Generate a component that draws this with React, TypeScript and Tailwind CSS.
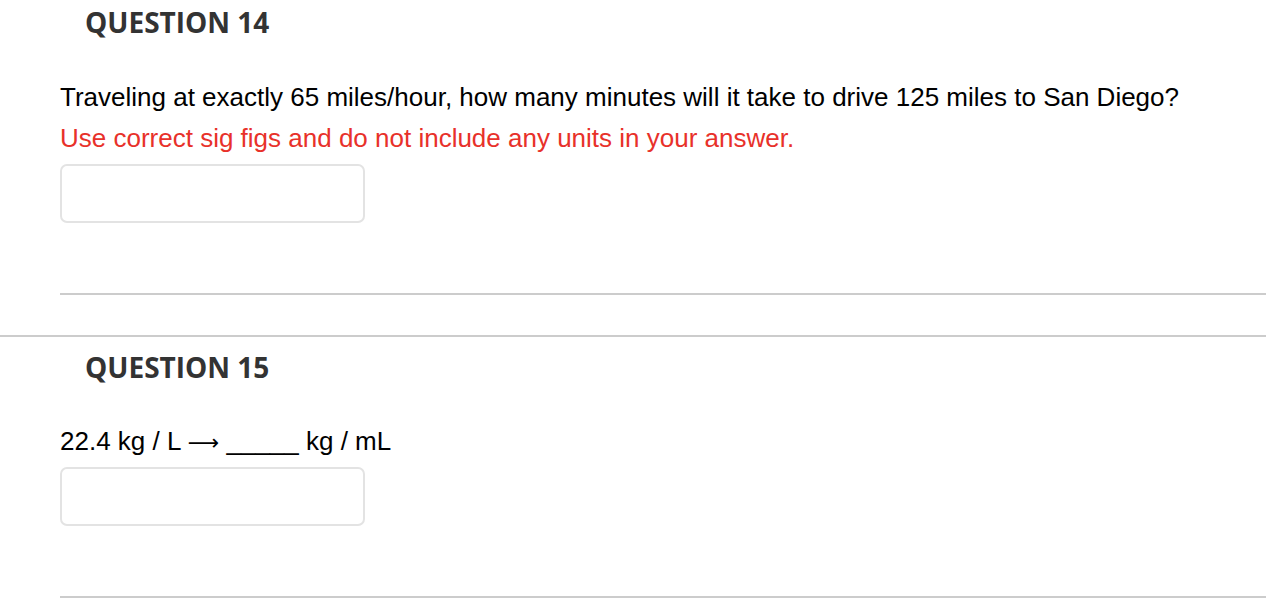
import React from 'react';

const AnswerBox = () => (
  <input
    type="text"
    className="block w-[305px] h-[59px] rounded-[7px] border-2 border-[#e3e3e3] bg-white outline-none"
  />
);

const QuestionHeading = ({ n }: { n: number }) => (
  <h2 className="pl-[25px] text-[28px] leading-[36px] font-bold text-[#333333] [font-family:'Open_Sans',sans-serif]">
    QUESTION {n}
  </h2>
);

export default function App() {
  return (
    <div className="bg-white w-[1266px] h-[598px] overflow-hidden [font-family:'Liberation_Sans',Arial,sans-serif]">
      <section className="pl-[60px] pt-[4px]">
        <QuestionHeading n={14} />
        <p className="mt-[42px] text-[26px] leading-[30px] text-black">
          Traveling at exactly 65 miles/hour, how many minutes will it take to drive 125 miles to San Diego?
        </p>
        <p className="mt-[11px] text-[26px] leading-[30px] text-[#e8312a]">
          Use correct sig figs and do not include any units in your answer.
        </p>
        <div className="mt-[11px]">
          <AnswerBox />
        </div>
        <hr className="mt-[70px] border-0 h-[2px] bg-[#cccccc]" />
      </section>

      <hr className="mt-[40px] border-0 h-[2px] bg-[#cccccc]" />

      <section className="pl-[60px] pt-[12px]">
        <QuestionHeading n={15} />
        <p className="mt-[41px] text-[26px] leading-[30px] text-black">
          22.4 kg / L <span className="[font-family:'DejaVu_Sans',sans-serif] text-[22px] leading-[0]">⟶</span> _____ kg / mL
        </p>
        <div className="mt-[11px]">
          <AnswerBox />
        </div>
        <hr className="mt-[70px] border-0 h-[2px] bg-[#cccccc]" />
      </section>
    </div>
  );
}
